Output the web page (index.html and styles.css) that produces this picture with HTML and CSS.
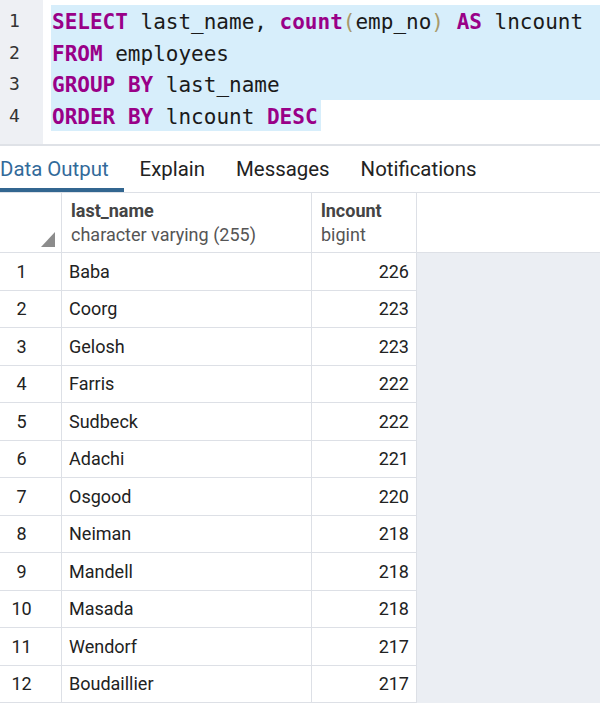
FILE: index.html
```html
<!DOCTYPE html>
<html>
<head>
<meta charset="utf-8">
<link rel="stylesheet" href="styles.css">
</head>
<body>
<div class="editor">
  <div class="gutter">
    <div class="ln">1</div>
    <div class="ln">2</div>
    <div class="ln">3</div>
    <div class="ln">4</div>
  </div>
  <div class="code">
    <div class="line sel"><span class="kw">SELECT</span> last_name, <span class="kw">count</span><span class="br">(</span>emp_no<span class="br">)</span> <span class="kw">AS</span> lncount</div>
    <div class="line sel"><span class="kw">FROM</span> employees</div>
    <div class="line sel"><span class="kw">GROUP</span> <span class="kw">BY</span> last_name</div>
    <div class="line sel partial"><span class="kw">ORDER</span> <span class="kw">BY</span> lncount <span class="kw">DESC</span></div>
  </div>
</div>
<div class="tabs">
  <div class="tab active">Data Output</div>
  <div class="tab">Explain</div>
  <div class="tab">Messages</div>
  <div class="tab">Notifications</div>
</div>
<div class="grid">
  <div class="hcell hnum"><svg width="14" height="15" viewBox="0 0 14 15"><polygon points="14,0 14,15 0,15" fill="#8c8c8c"/></svg></div>
  <div class="hcell"><div class="hname">last_name</div><div class="htype">character varying (255)</div></div>
  <div class="hcell"><div class="hname">lncount</div><div class="htype">bigint</div></div>
  <div class="hcell hfill"></div>

  <div class="cell num">1</div><div class="cell">Baba</div><div class="cell val">226</div>
  <div class="cell num">2</div><div class="cell">Coorg</div><div class="cell val">223</div>
  <div class="cell num">3</div><div class="cell">Gelosh</div><div class="cell val">223</div>
  <div class="cell num">4</div><div class="cell">Farris</div><div class="cell val">222</div>
  <div class="cell num">5</div><div class="cell">Sudbeck</div><div class="cell val">222</div>
  <div class="cell num">6</div><div class="cell">Adachi</div><div class="cell val">221</div>
  <div class="cell num">7</div><div class="cell">Osgood</div><div class="cell val">220</div>
  <div class="cell num">8</div><div class="cell">Neiman</div><div class="cell val">218</div>
  <div class="cell num">9</div><div class="cell">Mandell</div><div class="cell val">218</div>
  <div class="cell num">10</div><div class="cell">Masada</div><div class="cell val">218</div>
  <div class="cell num">11</div><div class="cell">Wendorf</div><div class="cell val">217</div>
  <div class="cell num">12</div><div class="cell">Boudaillier</div><div class="cell val">217</div>
</div>
</body>
</html>
```
FILE: styles.css
```css
html, body {
  margin: 0;
  padding: 0;
  background: #ffffff;
  overflow: hidden;
}
body {
  width: 600px;
  height: 703px;
  font-family: Roboto, "Liberation Sans", sans-serif;
}
.editor {
  display: flex;
  height: 146px;
  border-bottom: 2px solid #dfe2e7;
  box-sizing: border-box;
}
.gutter {
  width: 43px;
  background: #eef0f4;
  padding-top: 5px;
  box-sizing: border-box;
}
.ln {
  font-family: "DejaVu Sans Mono", monospace;
  font-size: 18px;
  line-height: 31.5px;
  color: #333;
  padding-left: 9px;
}
.code {
  flex: 1;
  margin-left: 8px;
  padding-top: 5px;
  font-family: "DejaVu Sans Mono", monospace;
  font-size: 21px;
  color: #1a1a1a;
}
.line {
  padding-left: 1px;
  padding-top: 4px;
  line-height: 27.5px;
  height: 31.5px;
  box-sizing: border-box;
  white-space: pre;
}
.sel {
  background: #d7eefb;
}
.partial {
  width: fit-content;
  padding-right: 3px;
}
.kw {
  color: #990088;
  font-weight: bold;
}
.br {
  color: #a8996a;
}
.tabs {
  display: flex;
  height: 47px;
  border-bottom: 1px solid #dde0e6;
  margin-left: -16px;
  box-sizing: border-box;
}
.tab {
  padding: 0 15px 0 16px;
  font-size: 20.4px;
  color: #222;
  line-height: 47px;
  border-bottom: 4px solid transparent;
  box-sizing: border-box;
  height: 46px;
}
.tab.active {
  color: #326a9a;
  border-bottom-color: #326690;
}
.grid {
  display: grid;
  grid-template-columns: 62px 250px 105px 1fr;
  grid-template-rows: 60px;
  grid-auto-rows: 37.5px;
  background: #ebeef3;
  height: 510px;
  align-content: start;
}
.hcell {
  grid-row: 1;
  background: #fff;
  border-right: 1px solid #dde0e6;
  border-bottom: 1px solid #dde0e6;
  padding-left: 9px;
  padding-top: 7px;
  box-sizing: border-box;
  height: 60px;
}
.hnum {
  display: flex;
  align-items: flex-end;
  justify-content: flex-end;
  padding: 0 6px 5px 0;
}
.hfill {
  border-right: none;
}
.hname {
  font-size: 18px;
  font-weight: bold;
  color: #444;
  line-height: 22px;
}
.htype {
  font-size: 18px;
  color: #555;
  line-height: 25px;
}
.cell {
  background: #fff;
  border-right: 1px solid #dde0e6;
  border-bottom: 1px solid #dde0e6;
  font-size: 18px;
  color: #222;
  display: flex;
  align-items: center;
  padding-left: 7px;
  box-sizing: border-box;
}
.cell.num {
  grid-column: 1;
  justify-content: center;
  padding-left: 0;
  padding-right: 18px;
}
.cell.val {
  justify-content: flex-end;
  padding-left: 0;
  padding-right: 7px;
}
```
